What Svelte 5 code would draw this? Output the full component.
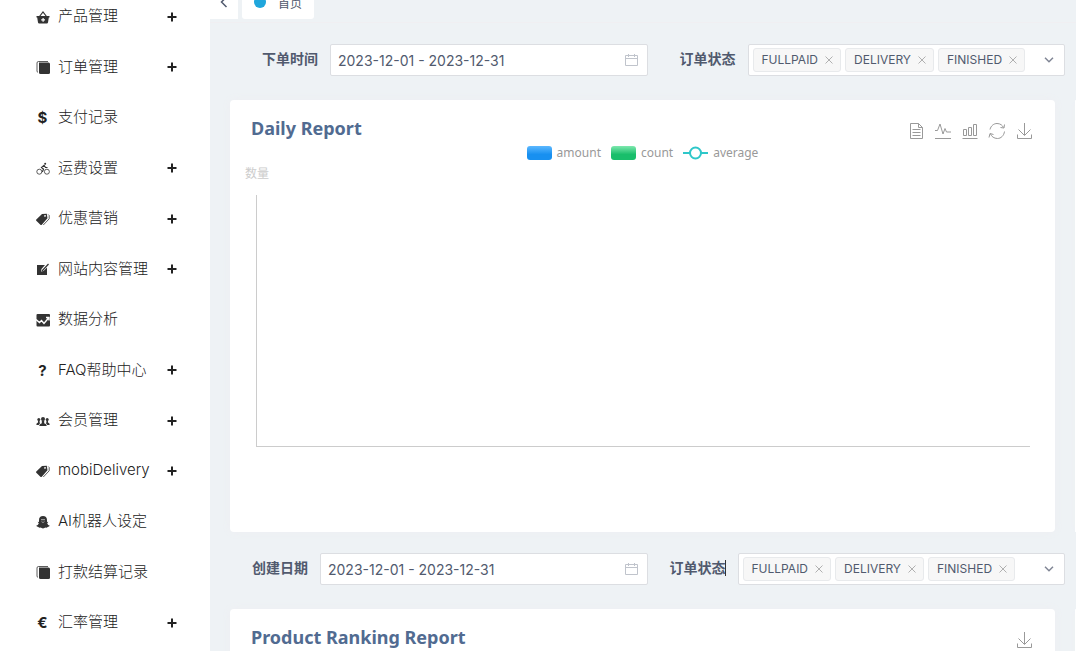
<script>
	// DATA
	const menu = [
		{ label: '产品管理', icon: 'basket', children: true },
		{ label: '订单管理', icon: 'albums', children: true },
		{ label: '支付记录', sign: '$' },
		{ label: '运费设置', icon: 'bicycle', children: true },
		{ label: '优惠营销', icon: 'tags', children: true },
		{ label: '网站内容管理', icon: 'compose', children: true },
		{ label: '数据分析', icon: 'chart' },
		{ label: 'FAQ帮助中心', sign: '?', children: true },
		{ label: '会员管理', icon: 'people', children: true },
		{ label: 'mobiDelivery', icon: 'tags', children: true },
		{ label: 'AI机器人设定', icon: 'ghost' },
		{ label: '打款结算记录', icon: 'albums' },
		{ label: '汇率管理', sign: '€', children: true }
	];

	const tools = ['Data View', 'Line', 'Bar', 'Restore', 'Save'];

	// STATE
	let orderDate = '2023-12-01 - 2023-12-31';
	let createDate = '2023-12-01 - 2023-12-31';
	let filters = {
		order: ['FULLPAID', 'DELIVERY', 'FINISHED'],
		product: ['FULLPAID', 'DELIVERY', 'FINISHED']
	};

	// METHODS
	function removeTag(key, tag) {
		filters[key] = filters[key].filter((t) => t !== tag);
	}
</script>

{#snippet toolIcon(name)}
	<svg width="18" height="18" viewBox="0 0 18 18" class="tool-icon">
		{#if name === 'Data View'}
			<path d="M3.500 1.500h8l4 4v11h-12zM11.500 1.500v4h4M5.500 7.500h8M5.500 10.500h8M5.500 13.500h8" />
		{:else if name === 'Line'}
			<path d="M1 8.500h2.500L6 2l3 10 2-5.500 1.500 3.500H17M1 16.500h16" />
		{:else if name === 'Bar'}
			<path d="M2.500 7.500h3v6h-3zM7.500 5.500h3v8h-3zM12.500 2.500h3v11h-3zM1.500 16.500h15" />
		{:else if name === 'Restore'}
			<path d="M2 7.500C3 3.500 6 1.500 9 1.500c3.500 0 5.500 2 6.500 4M16.500 2.500l-.5 3.500-3.500-.5M16.500 9.500c-.5 4-3.500 7-7 7-3.500 0-6-2-7-4.500M1 15.500l1-4 3.500 1" />
		{:else}
			<path d="M9.500 1v12M3.500 7.500l6 6 6-6M2.500 12.500v4h14v-4" />
		{/if}
	</svg>
{/snippet}

{#snippet dateField(id, value)}
	<span class="control">
		<input type="text" {id} {value} />
		<svg width="13" height="12" viewBox="0 0 13 12" class="calendar">
			<path d="M.5 1.500h12v10H.5zM.5 4.500h12M3.500 0v3M9.500 0v3" />
		</svg>
	</span>
{/snippet}

{#snippet statusField(key)}
	<div class="control select" role="group" aria-labelledby="{key}-status">
		{#each filters[key] as tag}
			<span class="tag">
				{tag}
				<button type="button" aria-label="Remove {tag}" on:click={() => removeTag(key, tag)}>
					<svg width="8" height="8" viewBox="0 0 8 8"><path d="M.5.5l7 7M7.500.5l-7 7" /></svg>
				</button>
			</span>
		{/each}
		<button type="button" class="arrow" aria-label="Open">
			<svg width="10" height="6" viewBox="0 0 10 6"><path d="M1 .8l4 4 4-4" /></svg>
		</button>
	</div>
{/snippet}

<div class="layout">
	<nav class="sidebar">
		{#each menu as item}
			<a href="#menu">
				<span class="icon">
					{#if item.sign}
						{item.sign}
					{:else}
						<svg width="14" height="14" viewBox="0 0 14 14">
							{#if item.icon === 'basket'}
								<path d="M3.500 6.500L7 2l3.500 4.500" class="line" />
								<path fill-rule="evenodd" d="M.5 6h13v1.500h-.7L12 12.500q-.2 1-1.200 1H3.200q-1 0-1.200-1L1.200 7.500H.5zM6.500 8v1.300H5.200v1.200h1.300v1.300h1.200v-1.300H9V9.300H7.700V8z" />
							{:else if item.icon === 'albums'}
								<path d="M3 2.500h9.500q1.500 0 1.500 1.500v8.500q0 1.500-1.500 1.500H4.500q-1.500 0-1.500-1.500z" />
								<path d="M12 1.500H2.500q-1.500 0-1.500 1.500v8q0 1 1 1.500" class="thin" />
							{:else if item.icon === 'bicycle'}
								<circle cx="3.300" cy="10.700" r="2.500" class="thin" />
								<circle cx="10.900" cy="10.700" r="2.500" class="thin" />
								<path d="M8.500 4L5.500 6.500l2 1.700L6.300 11M8.200 4.500l1.300 2h2" class="line" />
								<circle cx="9.200" cy="2.800" r="1" />
							{:else if item.icon === 'tags'}
								<path fill-rule="evenodd" d="M.3 7.500L6 2l4.800-.2.700 4.400-5.700 6.600q-.7.600-1.400 0L.3 8.800q-.5-.6 0-1.300zM9 3a.9.9 0 1 0 .1 1.800A.9.9 0 0 0 9 3z" />
								<path d="M12.200 2.500l1 1v3.300L7.300 13" class="thin" />
							{:else if item.icon === 'compose'}
								<path d="M1 3h8L5.500 7 5 9.500l2.500-.5L11 5.500V13H1z" />
								<path d="M6 9l6.500-7" class="line" />
							{:else if item.icon === 'chart'}
								<path d="M1.500 1H13q1 0 1 1v10.500q0 1-1 1H1.500q-1 0-1-1V2q0-1 1-1z" />
								<path d="M0 6.500l3.500 3 2-2 2.500 3L12.500 5M10 4.500h3v3" stroke="#fff" stroke-width="1.400" fill="none" />
							{:else if item.icon === 'people'}
								<circle cx="7" cy="5" r="2" />
								<path d="M3.200 12q.2-2.300 2.600-2.800V6.500h2.400v2.700q2.400.5 2.600 2.800z" />
								<circle cx="2.800" cy="5.500" r="1.500" />
								<circle cx="11.200" cy="5.500" r="1.500" />
								<path d="M.3 11q.1-2 1.700-2.400V6.500h1.600v2L4.200 9 2.700 11zM13.700 11q-.1-2-1.700-2.400V6.500h-1.600v2l-.6.5 1.500 2z" />
							{:else}
								<path fill-rule="evenodd" d="M7 1c2.500 0 4 1.600 4 4v2l1.300-.2-1.100 1.700q.8 1.700 2.600 2.200-.5 1.100-2.200 1.300-.5 1-2 .6L7 13.500l-2.600-.9q-1.500.4-2-.6Q.7 11.800.2 10.700 2 10.200 2.800 8.500L1.700 6.800 3 7V5c0-2.400 1.500-4 4-4zM5.500 4v1.300h1V4zm2 0v1.300h1V4zM5 6.600Q7 8.500 9 6.600 7 7.300 5 6.600z" />
							{/if}
						</svg>
					{/if}
				</span>
				<span class="name">{item.label}</span>
				{#if item.children}
					<svg width="10" height="10" viewBox="0 0 10 10" class="plus"><path d="M5 .5v9M.5 5h9" /></svg>
				{/if}
			</a>
		{/each}
	</nav>

	<main>
		<div class="tabs">
			<button type="button" class="back" aria-label="Back">
				<svg width="8" height="12" viewBox="0 0 8 12"><path d="M6.500 1L1.500 6l5 5" /></svg>
			</button>
			<button type="button" class="tab"><i class="dot"></i>首页</button>
		</div>

		<form class="filters">
			<label for="order-date">下单时间</label>
			{@render dateField('order-date', orderDate)}
			<span class="label" id="order-status">订单状态</span>
			{@render statusField('order')}
		</form>

		<div class="cards">
			<section class="card">
				<header>
					<h2>Daily Report</h2>
					<div class="tools">
						{#each tools as tool}
							<button type="button" aria-label={tool}>{@render toolIcon(tool)}</button>
						{/each}
					</div>
				</header>
				<div class="legend">
					<span><i class="swatch blue"></i>amount</span>
					<span><i class="swatch green"></i>count</span>
					<span>
						<svg width="25" height="14" viewBox="0 0 25 14">
							<path d="M0 7h25" />
							<circle cx="12.500" cy="7" r="5.500" />
						</svg>average
					</span>
				</div>
				<div class="axis-name">数量</div>
				<div class="plot"></div>
			</section>
			<section class="card"></section>
		</div>

		<form class="filters narrow">
			<label for="create-date">创建日期</label>
			{@render dateField('create-date', createDate)}
			<span class="label caret" id="product-status">订单状态</span>
			{@render statusField('product')}
		</form>

		<div class="cards">
			<section class="card">
				<header>
					<h2>Product Ranking Report</h2>
					<div class="tools">
						<button type="button" aria-label="Save">{@render toolIcon('Save')}</button>
					</div>
				</header>
				<div class="plot"></div>
			</section>
			<section class="card"></section>
		</div>
	</main>
</div>

<style>
	:global(body) {
		margin: 0;
		font-family: Inter, "Noto Sans CJK SC", sans-serif;
		font-size: 14px;
		color: #515a6e;
		background: #eef2f5;
	}
	button {
		padding: 0;
		border: 0;
		background: none;
		color: inherit;
		font: inherit;
		cursor: pointer;
	}
	svg {
		display: block;
		flex: none;
	}
	.layout {
		display: flex;
		height: 100vh;
		overflow: hidden;
	}

	/* sidebar */
	.sidebar {
		box-sizing: border-box;
		flex: none;
		display: flex;
		flex-direction: column;
		justify-content: space-between;
		width: 210px;
		padding: 0 33px 15px 35px;
		background: #fff;
	}
	.sidebar a {
		display: flex;
		align-items: center;
		height: 30px;
		color: #222;
		font-size: 15px;
		font-weight: 300;
		text-decoration: none;
	}
	.icon {
		width: 15px;
		margin-right: 8px;
		padding-top: 3px;
		font-weight: 700;
		text-align: center;
		fill: #333;
	}
	.icon svg {
		margin-left: 1px;
	}
	.icon .line,
	.icon .thin {
		fill: none;
		stroke: #333;
		stroke-width: 1.2;
	}
	.icon .thin {
		stroke-width: .8;
	}
	.name {
		flex: 1;
		padding-bottom: 1px;
		white-space: nowrap;
	}
	.plus {
		margin-top: 3px;
		stroke: #222;
		stroke-width: 2;
	}

	/* content */
	main {
		flex: 1;
		min-width: 0;
		overflow: hidden;
	}
	.tabs {
		display: flex;
		align-items: flex-end;
		gap: 4px;
		height: 19px;
		padding-bottom: 3px;
		border-bottom: 1px solid #f0eff2;
		overflow: hidden;
	}
	.tabs button {
		display: flex;
		align-items: center;
		height: 34px;
		flex: none;
		background: #fff;
		font-size: 12px;
	}
	.back {
		justify-content: center;
		width: 28px;
	}
	.back path {
		fill: none;
		stroke: #515a6e;
		stroke-width: 1.5;
	}
	.tabs .tab {
		padding: 0 12px;
		border-radius: 3px;
	}
	.dot {
		width: 12px;
		height: 12px;
		margin-right: 12px;
		border-radius: 50%;
		background: #1fa6dc;
	}

	.filters {
		display: grid;
		grid-template-columns: 100px 1fr 100px 1fr;
		margin: 21px 11px 24px 20px;
	}
	.filters.narrow {
		grid-template-columns: 90px 1fr 90px 1fr;
	}
	label,
	.label {
		position: relative;
		padding-right: 12px;
		font-weight: 700;
		line-height: 30px;
		text-align: right;
		white-space: nowrap;
	}
	.caret::after {
		content: "";
		position: absolute;
		top: 7px;
		right: 12px;
		width: 1px;
		height: 16px;
		background: #333;
	}
	.control {
		box-sizing: border-box;
		display: flex;
		align-items: center;
		min-width: 0;
		height: 32px;
		padding: 0 9px 0 7px;
		border: 1px solid #dcdee2;
		border-radius: 2px;
		background: #fff;
	}
	.control input {
		flex: 1;
		min-width: 0;
		height: 30px;
		padding: 1px 0 0;
		box-sizing: border-box;
		border: 0;
		outline: 0;
		background: none;
		color: #515a6e;
		font: 14px Inter, sans-serif;
	}
	.calendar {
		fill: none;
		stroke: #c0c4cc;
	}
	.select {
		gap: 4px;
		padding: 0 10px 0 4px;
	}
	.tag {
		box-sizing: border-box;
		display: flex;
		align-items: center;
		gap: 7px;
		height: 24px;
		padding: 0 7px 1px 8px;
		border: 1px solid #e8eaec;
		border-radius: 3px;
		background: #f7f7f7;
		font-size: 12px;
		white-space: nowrap;
	}
	.tag path {
		stroke: #b0b0b0;
	}
	.arrow {
		margin-left: auto;
	}
	.arrow path {
		fill: none;
		stroke: #808695;
		stroke-width: 1.5;
	}

	/* cards */
	.cards {
		display: grid;
		grid-template-columns: 1fr 1px;
		gap: 20px;
		margin: 0 0 21px 20px;
	}
	.card {
		min-width: 0;
		border-radius: 4px;
		background: #fff;
		box-shadow: 0 0 10px #eeeef2;
	}
	header {
		display: flex;
		justify-content: space-between;
		padding: 16px 22px 0 21px;
	}
	h2 {
		margin: 0;
		color: #516b91;
		font: 700 18px/24px "Noto Sans", sans-serif;
	}
	.tools {
		display: flex;
		gap: 9px;
		padding-top: 6px;
		height: 18px;
	}
	.tool-icon {
		fill: none;
		stroke: #999;
	}
	.legend {
		display: flex;
		justify-content: center;
		gap: 10px;
		margin: 5px 0;
		color: #999;
		font: 12px/16px "Noto Sans", sans-serif;
	}
	.legend span {
		display: flex;
		align-items: center;
		gap: 5px;
	}
	.legend path,
	.legend circle {
		fill: #fff;
		stroke: #2ec7c9;
		stroke-width: 2;
	}
	.swatch {
		width: 25px;
		height: 14px;
		border-radius: 3px;
	}
	.blue {
		background: linear-gradient(#5cb8ff, #1890f0 60%);
	}
	.green {
		background: linear-gradient(#7ee8ae, #19be6b 60%);
	}
	.axis-name {
		margin-left: 15px;
		color: #ccc;
		font-size: 12px;
		line-height: 16px;
	}
	.plot {
		height: 251px;
		margin: 13px 25px 0 26px;
		border: solid #ccc;
		border-width: 0 0 1px 1px;
	}
	.card:has(.plot) {
		padding-bottom: 85px;
	}
</style>
